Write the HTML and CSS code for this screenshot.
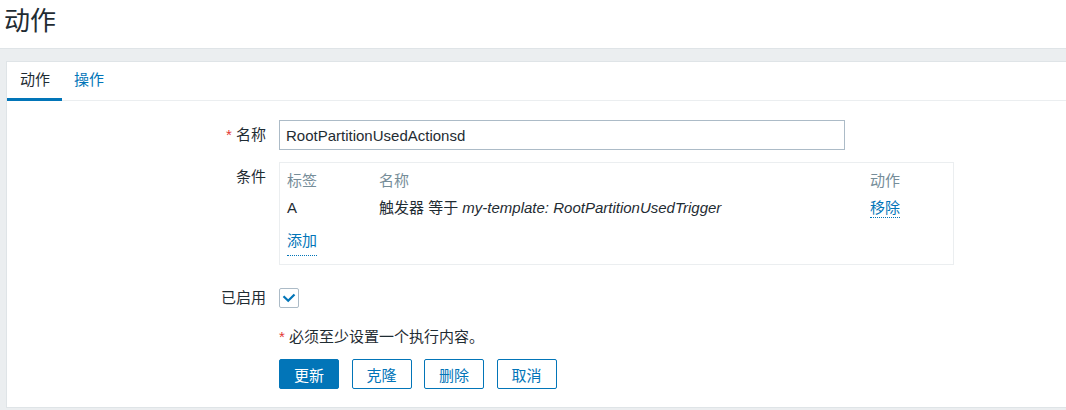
FILE: index.html
```html
<!DOCTYPE html>
<html lang="zh-CN">
<head>
<meta charset="utf-8">
<title>动作</title>
<link rel="stylesheet" href="styles.css">
</head>
<body>
<header class="page-header">
  <h1 class="page-title">动作</h1>
</header>
<main class="wrapper">
  <section class="panel">
    <nav class="tabs">
      <span class="tab tab-active">动作</span>
      <span class="tab">操作</span>
    </nav>
    <form class="form">
      <div class="form-row row-name">
        <label class="form-label"><span class="req">*</span> 名称</label>
        <div class="form-field">
          <input class="text-input" type="text" value="RootPartitionUsedActionsd">
        </div>
      </div>
      <div class="form-row row-cond">
        <label class="form-label label-top">条件</label>
        <div class="form-field">
          <div class="cond-box">
            <div class="cond-row cond-head">
              <span class="col-1">标签</span>
              <span class="col-2">名称</span>
              <span class="col-3">动作</span>
            </div>
            <div class="cond-row cond-data">
              <span class="col-1">A</span>
              <span class="col-2">触发器 等于 <em class="trig">my-template: RootPartitionUsedTrigger</em></span>
              <span class="col-3"><span class="link">移除</span></span>
            </div>
            <div class="cond-row cond-add">
              <span class="link">添加</span>
            </div>
          </div>
        </div>
      </div>
      <div class="form-row row-enabled">
        <label class="form-label label-small">已启用</label>
        <div class="form-field">
          <span class="checkbox">
            <svg width="14" height="10" viewBox="0 0 14 10"><path d="M1.5 3.2 L6.2 7.8 L12.5 1.5" fill="none" stroke="#0275b8" stroke-width="2.2"/></svg>
          </span>
        </div>
      </div>
      <div class="form-row row-note">
        <span class="form-label"></span>
        <div class="form-field note"><span class="req">*</span> 必须至少设置一个执行内容。</div>
      </div>
      <div class="form-row row-buttons">
        <span class="form-label"></span>
        <div class="form-field buttons">
          <button type="button" class="btn btn-primary">更新</button>
          <button type="button" class="btn btn-alt">克隆</button>
          <button type="button" class="btn btn-alt">删除</button>
          <button type="button" class="btn btn-alt">取消</button>
        </div>
      </div>
    </form>
  </section>
</main>
</body>
</html>
```

FILE: styles.css
```css
* { box-sizing: border-box; }

html, body {
  margin: 0;
  padding: 0;
}

body {
  background: #ebeef0;
  color: #1f2c33;
  font-family: "Liberation Sans", Arial, "Noto Sans CJK SC", sans-serif;
  font-size: 15px;
  height: 410px;
  overflow: hidden;
}

.page-header {
  background: #ffffff;
  height: 49px;
  border-bottom: 1px solid #dfe4e7;
}

.page-title {
  margin: 0;
  padding-left: 4px;
  font-size: 26px;
  font-weight: normal;
  line-height: 42px;
}

.wrapper {
  padding: 12px 0 0 6px;
}

.panel {
  background: #ffffff;
  border: 1px solid #dfe4e7;
  border-right: none;
  padding-bottom: 18px;
}

.tabs {
  display: flex;
  height: 39px;
  border-bottom: 1px solid #ebeef0;
}

.tab {
  display: block;
  padding: 0 12px;
  height: 39px;
  line-height: 36px;
  color: #0275b8;
}

.tab-active {
  padding-left: 13px;
  color: #1f2c33;
  border-bottom: 3px solid #0275b8;
}

.form {
  padding-top: 19px;
}

.form-row {
  display: grid;
  grid-template-columns: 259px 1fr;
  column-gap: 13px;
}

.form-label {
  text-align: right;
  line-height: 30px;
}

.req {
  color: #e33734;
}

.text-input {
  display: block;
  width: 566px;
  height: 30px;
  border: 1px solid #acbbc7;
  padding: 0 6px;
  font: inherit;
  color: #1f2c33;
  background: #fff;
  outline: none;
}

.row-cond {
  margin-top: 12px;
}

.label-top {
  line-height: 18px;
  padding-top: 6px;
}

.cond-box {
  width: 675px;
  border: 1px solid #ebeef0;
  padding: 6px 7px 8px 7px;
}

.cond-row {
  display: flex;
  height: 24px;
  line-height: 24px;
}

.cond-head {
  color: #768d99;
}

.cond-data {
  margin-top: 3px;
}

.cond-add {
  margin-top: 12px;
}

.col-1 { width: 92px; }
.col-2 { width: 491px; }
.col-3 { flex: 1; }

.trig {
  font-style: italic;
}

.link {
  color: #0275b8;
  border-bottom: 1px dotted #0275b8;
  line-height: 18px;
  display: inline-block;
}

.row-enabled {
  margin-top: 23px;
}

.label-small {
  line-height: 20px;
}

.checkbox {
  display: flex;
  align-items: center;
  justify-content: center;
  width: 20px;
  height: 20px;
  border: 1px solid #acbbc7;
  border-radius: 2px;
  background: #fff;
}

.row-note {
  margin-top: 20px;
}

.row-note .form-label,
.note {
  line-height: 18px;
}

.row-buttons {
  margin-top: 13px;
}

.buttons {
  display: flex;
  gap: 12.5px;
}

.btn {
  width: 60px;
  height: 30px;
  padding: 0;
  font: inherit;
  border-radius: 2px;
  border: 1px solid #0275b8;
  cursor: pointer;
}

.btn-primary {
  background: #0275b8;
  color: #ffffff;
}

.btn-alt {
  background: #ffffff;
  color: #0275b8;
}
```
